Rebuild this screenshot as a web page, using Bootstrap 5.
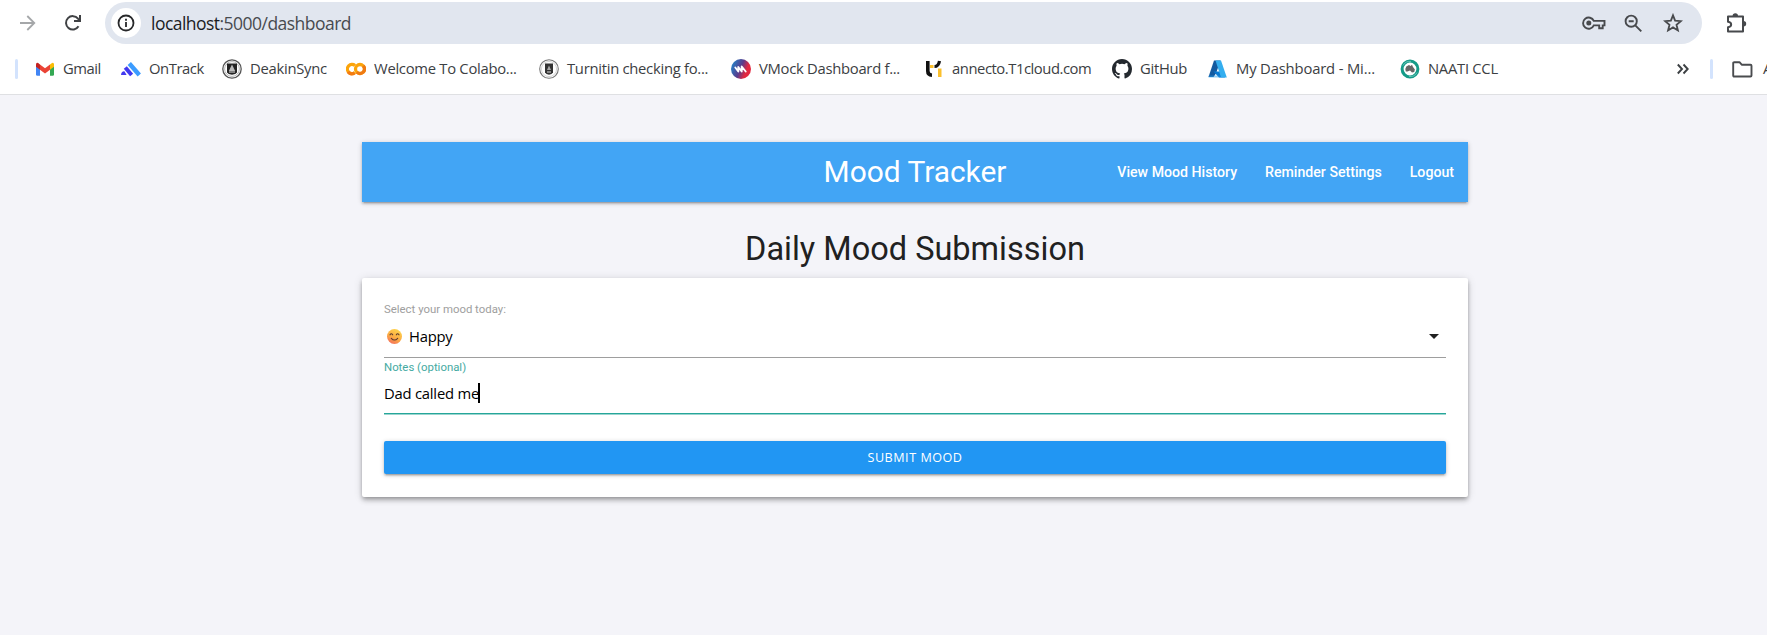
<!DOCTYPE html>
<html lang="en">
<head>
<meta charset="utf-8">
<title>Mood Tracker</title>
<link href="https://cdn.jsdelivr.net/npm/bootstrap@5.3.0/dist/css/bootstrap.min.css" rel="stylesheet">
<style>
body{background:#f4f4f9;font-family:Roboto,sans-serif;height:635px;overflow:hidden;color:#212121}
.chrome{height:95px;background:#fff;border-bottom:1px solid #dfe0e3;font-family:"Open Sans","Noto Sans",sans-serif;color:#3c4043;overflow:hidden}
.toolbar{height:46px}
.toolbar svg,.marks svg{display:block;flex:none}
.omni{margin-left:23px;width:1597px;height:42px;background:#e1e6ef;border-radius:21px;padding:0 18px 0 6px}
.site-info{width:30px;height:30px;background:#fff;border-radius:50%}
.url{font-size:17.5px;letter-spacing:-.53px;margin-left:10px;line-height:40px;color:#484b50}
.url b{font-weight:400;color:#1b1c1f}
.marks{height:46px;padding-left:15px;width:1800px}
.marks .items{display:grid;grid-template-columns:86px 101px 124px 193px 192px 193px 188px 96px 192px 120px;margin:-2px 0 0 17px}
.bm{font-size:14.8px;letter-spacing:-.28px;line-height:20px;white-space:nowrap;display:flex;align-items:center;gap:8px}
.items svg{margin-top:2px}
.bm.tight{letter-spacing:-.45px}
.bm.loose{letter-spacing:-.16px}
.divider{width:3px;height:20px;border-radius:2px;background:#d3e3fd;flex:none}
.app{width:1106px;margin-left:362px}
.app-nav{height:60px;margin-top:47px;background:#42a5f5;box-shadow:0 2px 2px 0 rgba(0,0,0,.14),0 3px 1px -2px rgba(0,0,0,.12),0 1px 5px 0 rgba(0,0,0,.2);display:grid;grid-template-columns:1fr auto 1fr;align-items:center;color:#fff}
.app-title{font-size:29.9px;line-height:60px;grid-column:2}
.app-nav a{color:#fff;font-size:14.15px;font-weight:500;text-decoration:none;white-space:nowrap}
.links{gap:28px;padding:2px 14px 0 0}
h1.heading{font-size:32.5px;font-weight:400;line-height:40px;margin:27px 0 9px;text-align:center}
.panel{height:219px;background:#fff;border-radius:2px;padding:22px;box-shadow:0 4px 5px 0 rgba(0,0,0,.14),0 1px 10px 0 rgba(0,0,0,.12),0 2px 4px -1px rgba(0,0,0,.3)}
.lab{font-size:11.4px;line-height:18px;color:#9e9e9e;display:block}
.val{font-family:"Open Sans","Noto Sans",sans-serif;font-size:14.8px;letter-spacing:-.22px;color:#000}
.select-row{height:40px;border-bottom:1px solid #9e9e9e;padding-bottom:2px}
.note-row{height:38px;border-bottom:1px solid #26a69a;box-shadow:0 1px 0 0 #9bd5cf;padding-bottom:3px}
.caret{width:2px;height:20px;background:#000;margin-left:-1px}
.submit{height:33px;margin-top:27px;background:#2196f3;border:0;border-radius:2px;color:#fff;font-family:"Open Sans",sans-serif;font-size:12.6px;letter-spacing:.52px;line-height:33px;padding:0;box-shadow:0 2px 2px 0 rgba(0,0,0,.14),0 3px 1px -2px rgba(0,0,0,.12),0 1px 5px 0 rgba(0,0,0,.2)}
</style>
</head>
<body>
<header class="chrome">
  <div class="toolbar d-flex align-items-center">
    <svg style="margin-left:19px" width="17" height="16" viewBox="0 0 17 16" fill="none" stroke="#a5a7a9" stroke-width="1.8"><path d="M1 8h14M8.300 1l7 7-7 7"/></svg>
    <svg style="margin-left:28px" width="18" height="18" viewBox="0 0 18 18" fill="none" stroke="#3f4144" stroke-width="2"><path d="M14.500 12.200A6.700 6.700 0 1 1 14 4.700l1.600 1.700"/><path d="M16 1v6h-6"/></svg>
    <div class="omni d-flex align-items-center">
      <span class="site-info d-flex align-items-center justify-content-center"><svg width="18" height="18" viewBox="0 0 18 18"><circle cx="9" cy="9" r="7.500" fill="none" stroke="#27282a" stroke-width="1.800"/><path d="M8.100 8h1.800v5H8.100zM8.100 4.800h1.800v1.900H8.100z" fill="#27282a"/></svg></span>
      <span class="url"><b>localhost</b>:5000/dashboard</span>
      <div class="d-flex align-items-center ms-auto" style="gap:18px">
        <svg width="24" height="16" viewBox="0 0 24 16" fill="none" stroke="#47494c" stroke-width="1.900"><path d="M11.800 5.900A5.600 5.600 0 1 0 11.800 10.400H17.200V13.300H20.700V10.400H22.500V5.900Z"/><circle cx="6.800" cy="8.100" r="2.500" fill="#47494c" stroke="none"/></svg>
        <svg width="19" height="19" viewBox="0 0 19 19" fill="none" stroke="#47494c" stroke-width="1.900"><circle cx="7.200" cy="7.200" r="5.600"/><path d="M11.300 11.300l6 6M4.700 7.200h5"/></svg>
        <svg style="margin:0 1px 0 2px" width="20" height="20" viewBox="0 0 20 20" fill="none" stroke="#47494c" stroke-width="1.800"><path d="M10 2.300l2.100 5.300 5.800.5-4.400 3.700 1.400 5.600L10 14.400l-4.900 3 1.400-5.600L2.100 8.100 7.900 7.600Z"/></svg>
      </div>
    </div>
    <svg style="margin:-1px 0 0 23px" width="22" height="22" viewBox="0 0 22 22"><path d="M3 4.500h15v15H3v-4.200c4.200-.6 4.200-5 0-5.600Z" fill="none" stroke="#47494c" stroke-width="2" stroke-linejoin="round"/><path d="M7.600 4a2.700 2.700 0 0 1 5.400 0ZM18.500 9a2.700 2.700 0 0 1 0 5.400Z" fill="#47494c"/></svg>
  </div>
  <div class="marks d-flex align-items-center">
    <span class="divider"></span>
    <div class="items">
      <span class="bm tight"><svg width="20" height="20" viewBox="0 0 20 20"><path d="M1 5v10.500q0 1.300 1.300 1.300H5V8z" fill="#4285f4"/><path d="M19 5v10.500q0 1.300-1.300 1.300H15V8z" fill="#34a853"/><path d="M15 5.500 17 4q2-.8 2 1.700v2L15 10.700z" fill="#fbbc04"/><path d="M5 5.500l5 3.800 5-3.800v5.200l-5 3.800-5-3.800z" fill="#ea4335"/><path d="M1 7.700v-2Q1 3 3.200 4L5 5.500v5.200z" fill="#c5221f"/></svg>Gmail</span>
      <span class="bm tight"><svg width="20" height="20" viewBox="0 0 20 20" stroke-linecap="butt"><path d="M8.300 4.500 18.300 16" stroke="#3b9cff" stroke-width="4.400"/><path d="M4.300 8.500l6.300 7.500" stroke="#4138ef" stroke-width="4"/><path d="M0 16q.4-4 3.600-3.600L5.600 16Z" fill="#4138ef"/></svg>OnTrack</span>
      <span class="bm"><svg width="20" height="20" viewBox="0 0 20 20"><circle cx="10" cy="10" r="9.200" fill="#fff" stroke="#555" stroke-width="1.300"/><circle cx="10" cy="10" r="7.400" fill="none" stroke="#888" stroke-width=".6"/><path d="M5 4.500h10v9q-1 1.700-5 2.300-4-.6-5-2.300Z" fill="#222"/><path d="M10 5.500l3.200 6.500H6.800Z" fill="#bbb"/><path d="M7 13h6" stroke="#ddd"/></svg>DeakinSync</span>
      <span class="bm"><svg width="20" height="20" viewBox="0 0 20 20" fill="none" stroke-width="3.300"><path d="M9 6.500a4.600 4.600 0 1 0 0 7" stroke="#fba40b"/><path d="M8.500 13.900a4.600 4.600 0 0 1-6.500-1" stroke="#f47b12"/><circle cx="14" cy="10" r="4.500" stroke="#fba40b"/><path d="M17.200 6.800a4.500 4.500 0 0 1-6.400 6.400" stroke="#ef7a12"/></svg>Welcome To Colabo...</span>
      <span class="bm"><svg width="20" height="20" viewBox="0 0 20 20"><circle cx="10" cy="10" r="9.300" fill="#fff" stroke="#777" stroke-width="1.100"/><circle cx="10" cy="10" r="7.600" fill="none" stroke="#bbb" stroke-width=".6"/><path d="M6 4.500h8v9q-1 1.700-4 2.200-3-.5-4-2.200Z" fill="#333"/><path d="M10 6.500l2 4.500H8Z" fill="#aaa"/><path d="M8 13h4" stroke="#ddd"/></svg>Turnitin checking fo...</span>
      <span class="bm"><svg width="20" height="20" viewBox="0 0 20 20"><defs><linearGradient id="vm" x1="0" y1=".2" x2="1" y2=".6"><stop offset=".1" stop-color="#2a78bf"/><stop offset=".5" stop-color="#5a3c8c"/><stop offset=".8" stop-color="#e22840"/></linearGradient></defs><circle cx="10" cy="10" r="10" fill="url(#vm)"/><path d="M4.300 8.500l3 4V8l3.400 4.500V7.500l4 5" fill="none" stroke="#fff" stroke-width="1.900" stroke-linejoin="round" stroke-linecap="round"/></svg>VMock Dashboard f...</span>
      <span class="bm tight"><svg width="20" height="20" viewBox="0 0 20 20"><path d="M3.800 2v10q0 4 4.200 4.200" fill="none" stroke="#111" stroke-width="3.600"/><path d="M6 6h3.500v3H6zM14 9.500h3.500V18H14z" fill="#fbc02d"/><path d="M10.500 7.500q4 0 5-5.500" fill="none" stroke="#111" stroke-width="3.200"/></svg>annecto.T1cloud.com</span>
      <span class="bm"><svg width="20" height="20" viewBox="0 0 16 16"><path fill="#24292f" d="M8 0C3.580 0 0 3.580 0 8c0 3.540 2.290 6.530 5.470 7.590.4.070.55-.17.55-.38 0-.19-.01-.82-.01-1.490-2.010.37-2.530-.49-2.690-.94-.09-.23-.48-.94-.82-1.130-.28-.15-.68-.52-.01-.53.630-.01 1.080.58 1.230.82.720 1.210 1.870.87 2.330.66.070-.52.280-.87.510-1.070-1.780-.2-3.640-.89-3.640-3.950 0-.87.310-1.590.82-2.150-.08-.2-.36-1.020.08-2.120 0 0 .67-.21 2.200.82a7.500 7.500 0 0 1 4 0c1.530-1.040 2.200-.82 2.200-.82.440 1.100.16 1.920.08 2.120.510.560.820 1.270.820 2.150 0 3.070-1.870 3.750-3.650 3.950.290.250.540.730.540 1.480 0 1.070-.01 1.930-.01 2.200 0 .21.150.460.550.380A8 8 0 0 0 16 8c0-4.420-3.580-8-8-8Z"/></svg>GitHub</span>
      <span class="bm loose"><svg width="20" height="20" viewBox="0 0 20 20"><path d="M6 1.500h6.500L8 14.500 5.500 18H.5z" fill="#13599f"/><path d="M5.500 12.500h9L17 18.500H11z" fill="#0878d2"/><path d="M7.500 1.500h5.500L18.800 18.500H13z" fill="#34aeef"/><path d="M.8 16.500H12l1 2H.5z" fill="#2498e6" opacity=".5"/></svg>My Dashboard - Mi...</span>
      <span class="bm"><svg width="20" height="20" viewBox="0 0 20 20"><circle cx="10" cy="10" r="7.900" fill="#fff" stroke="#149b88" stroke-width="3"/><path d="M3 6.500A8 8 0 0 1 11 2.400M17 13.500a8 8 0 0 1-8 4" fill="none" stroke="#8ed2c8" stroke-width=".7"/><path d="M5.300 10l1-2.400L9 6l1.500 1L12 5.700l1 2.300 1.900 2.500-.7 2.500-2.200.4-2-1.800-2.500.9H5.800Z" fill="#666"/></svg>NAATI CCL</span>
    </div>
    <svg style="margin-left:157px" width="12" height="12" viewBox="0 0 12 12" fill="none" stroke="#3c4043" stroke-width="1.900"><path d="M.8 1.500 5 6 .8 10.500M6.500 1.500 10.700 6 6.500 10.500"/></svg>
    <span class="divider" style="margin-left:21px"></span>
    <svg style="margin-left:19px" width="21" height="17" viewBox="0 0 21 17" fill="none" stroke="#4a4c4f" stroke-width="1.900" stroke-linejoin="round"><path d="M1.200 2.200Q1.200 1.200 2.200 1.200H7.500l2.200 2.500H18.500q1 0 1 1V14.500q0 1-1 1H2.200q-1 0-1-1Z"/></svg>
    <span class="bm" style="margin:-2px 0 0 10px">A</span>
  </div>
</header>
<main class="app">
  <nav class="app-nav">
    <span class="app-title">Mood Tracker</span>
    <div class="links d-flex justify-content-end"><a href="#">View Mood History</a><a href="#">Reminder Settings</a><a href="#">Logout</a></div>
  </nav>
  <h1 class="heading">Daily Mood Submission</h1>
  <form class="panel">
    <span class="lab">Select your mood today:</span>
    <div class="select-row d-flex align-items-center">
      <svg style="margin-left:3px" width="15" height="15" viewBox="0 0 15 15"><defs><linearGradient id="fc" x1=".8" y1="0" x2=".3" y2="1"><stop offset="0" stop-color="#ffd84d"/><stop offset=".6" stop-color="#fba944"/><stop offset="1" stop-color="#f4705c"/></linearGradient></defs><circle cx="7.500" cy="7.500" r="7.500" fill="url(#fc)"/><path d="M3 5.800q1.300-2 2.700 0M9.300 5.800q1.300-2 2.700 0M4.300 9.300q3.200 3.400 6.400 0" fill="none" stroke="#5b3a2e" stroke-width="1.100" stroke-linecap="round"/></svg>
      <span class="val" style="margin-left:7px">Happy</span>
      <svg class="ms-auto" style="margin-right:7px" width="10" height="5" viewBox="0 0 10 5"><path d="M0 0h10L5 5z" fill="#212121"/></svg>
    </div>
    <span class="lab" style="color:#45aaa2">Notes (optional)</span>
    <div class="note-row d-flex align-items-center"><span class="val">Dad called me</span><span class="caret"></span></div>
    <button type="button" class="submit btn w-100 d-block">SUBMIT MOOD</button>
  </form>
</main>
<script src="https://cdn.jsdelivr.net/npm/bootstrap@5.3.0/dist/js/bootstrap.bundle.min.js"></script>
</body>
</html>
